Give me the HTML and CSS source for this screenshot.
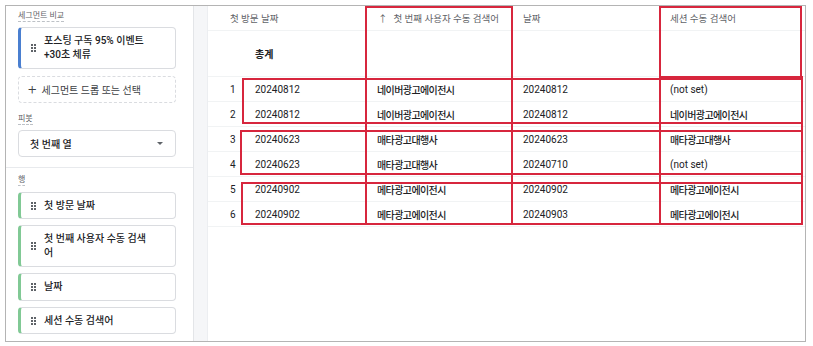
FILE: index.html
```html
<!DOCTYPE html>
<html lang="ko">
<head>
    <meta charset="UTF-8">
    <title>탐색 분석</title>
    <link rel="stylesheet" href="styles.css">
</head>
<body>
    <div class="frame">
        <aside class="panel">
            <section class="block">
                <div class="label">세그먼트 비교</div>
                <div class="chip chip-blue chip-tall">
                    <svg class="grip" viewBox="0 0 5 8"><g fill="#5f6368"><rect x="0" y="0" width="2" height="2"/><rect x="3" y="0" width="2" height="2"/><rect x="0" y="3" width="2" height="2"/><rect x="3" y="3" width="2" height="2"/><rect x="0" y="6" width="2" height="2"/><rect x="3" y="6" width="2" height="2"/></g></svg>
                    <span>포스팅 구독 95% 이벤트<br>+30초 체류</span>
                </div>
                <div class="drop"><span class="plus">+</span>세그먼트 드롭 또는 선택</div>
                <div class="label label-gap">피봇</div>
                <div class="select">
                    <span>첫 번째 열</span>
                    <span class="caret"></span>
                </div>
            </section>
            <section class="block block-rows">
                <div class="label">행</div>
                <div class="chip chip-green">
                    <svg class="grip" viewBox="0 0 5 8"><g fill="#5f6368"><rect x="0" y="0" width="2" height="2"/><rect x="3" y="0" width="2" height="2"/><rect x="0" y="3" width="2" height="2"/><rect x="3" y="3" width="2" height="2"/><rect x="0" y="6" width="2" height="2"/><rect x="3" y="6" width="2" height="2"/></g></svg>
                    <span>첫 방문 날짜</span>
                </div>
                <div class="chip chip-green chip-tall">
                    <svg class="grip" viewBox="0 0 5 8"><g fill="#5f6368"><rect x="0" y="0" width="2" height="2"/><rect x="3" y="0" width="2" height="2"/><rect x="0" y="3" width="2" height="2"/><rect x="3" y="3" width="2" height="2"/><rect x="0" y="6" width="2" height="2"/><rect x="3" y="6" width="2" height="2"/></g></svg>
                    <span>첫 번째 사용자 수동 검색<br>어</span>
                </div>
                <div class="chip chip-green chip-mid">
                    <svg class="grip" viewBox="0 0 5 8"><g fill="#5f6368"><rect x="0" y="0" width="2" height="2"/><rect x="3" y="0" width="2" height="2"/><rect x="0" y="3" width="2" height="2"/><rect x="3" y="3" width="2" height="2"/><rect x="0" y="6" width="2" height="2"/><rect x="3" y="6" width="2" height="2"/></g></svg>
                    <span>날짜</span>
                </div>
                <div class="chip chip-green">
                    <svg class="grip" viewBox="0 0 5 8"><g fill="#5f6368"><rect x="0" y="0" width="2" height="2"/><rect x="3" y="0" width="2" height="2"/><rect x="0" y="3" width="2" height="2"/><rect x="3" y="3" width="2" height="2"/><rect x="0" y="6" width="2" height="2"/><rect x="3" y="6" width="2" height="2"/></g></svg>
                    <span>세션 수동 검색어</span>
                </div>
                <div class="drop"></div>
            </section>
        </aside>

        <div class="gutter"></div>

        <main class="table-wrap">
            <div class="grid">
                <div class="row head">
                    <div class="cell h-first">첫 방문 날짜</div>
                    <div class="cell c2"><span class="arrow">↑</span>첫 번째 사용자 수동 검색어</div>
                    <div class="cell c3">날짜</div>
                    <div class="cell c4">세션 수동 검색어</div>
                </div>
                <div class="row total">
                    <div class="cell idx"></div>
                    <div class="cell c1"><b>총계</b></div>
                    <div class="cell c2"></div>
                    <div class="cell c3"></div>
                    <div class="cell c4"></div>
                </div>
                <div class="row">
                    <div class="cell idx">1</div>
                    <div class="cell c1">20240812</div>
                    <div class="cell c2 ko">네이버광고에이전시</div>
                    <div class="cell c3">20240812</div>
                    <div class="cell c4">(not set)</div>
                </div>
                <div class="row">
                    <div class="cell idx">2</div>
                    <div class="cell c1">20240812</div>
                    <div class="cell c2 ko">네이버광고에이전시</div>
                    <div class="cell c3">20240812</div>
                    <div class="cell c4 ko">네이버광고에이전시</div>
                </div>
                <div class="row">
                    <div class="cell idx">3</div>
                    <div class="cell c1">20240623</div>
                    <div class="cell c2 ko">매타광고대행사</div>
                    <div class="cell c3">20240623</div>
                    <div class="cell c4 ko">매타광고대행사</div>
                </div>
                <div class="row">
                    <div class="cell idx">4</div>
                    <div class="cell c1">20240623</div>
                    <div class="cell c2 ko">매타광고대행사</div>
                    <div class="cell c3">20240710</div>
                    <div class="cell c4">(not set)</div>
                </div>
                <div class="row">
                    <div class="cell idx">5</div>
                    <div class="cell c1">20240902</div>
                    <div class="cell c2 ko">메타광고에이전시</div>
                    <div class="cell c3">20240902</div>
                    <div class="cell c4 ko">메타광고에이전시</div>
                </div>
                <div class="row">
                    <div class="cell idx">6</div>
                    <div class="cell c1">20240902</div>
                    <div class="cell c2 ko">메타광고에이전시</div>
                    <div class="cell c3">20240903</div>
                    <div class="cell c4 ko">메타광고에이전시</div>
                </div>
            </div>

            <!-- 빨간 표시 박스 -->
            <div class="mark mark-col2"></div>
            <div class="mark mark-col4"></div>
            <div class="mark mark-col4b"></div>
            <div class="mark mark-g1"></div>
            <div class="mark mark-g2"></div>
            <div class="mark mark-g3"></div>
        </main>
    </div>
</body>
</html>
```

FILE: styles.css
```css
body {
    margin: 0;
    background: #fff;
    font-family: Roboto, 'Noto Sans CJK KR', sans-serif;
    color: #202124;
}

.frame {
    margin: 5px 0 0 5px;
    width: 799px;
    height: 335px;
    border: 1px solid #b4b4b4;
    display: flex;
    overflow: hidden;
}

/* 왼쪽 설정 패널 */
.panel {
    width: 187px;
    flex: none;
    background: #fff;
}

.block {
    padding: 4px 17px 10px 12px;
    border-bottom: 1px solid #e8eaed;
}

.block-rows {
    padding-top: 6px;
    border-bottom: none;
}

.label {
    width: fit-content;
    font-size: 8px;
    line-height: 11px;
    color: #5f6368;
    border-bottom: 1px dashed #bdc1c6;
}

.label-gap {
    margin-top: 10px;
}

.chip {
    display: flex;
    align-items: center;
    gap: 8px;
    height: 27px;
    box-sizing: border-box;
    margin-top: 6px;
    padding-left: 10px;
    border: 1px solid #dadce0;
    border-left-width: 3px;
    border-radius: 4px;
    font-size: 10px;
    font-weight: 500;
    line-height: 14px;
}

.chip-tall {
    height: 42px;
}

.chip-mid {
    height: 28px;
}

.chip-blue {
    border-left-color: #4a7fd0;
    margin-top: 5px;
}

.chip-green {
    border-left-color: #81c995;
}

.grip {
    width: 5px;
    height: 8px;
    flex: none;
}

.drop {
    display: flex;
    align-items: center;
    height: 27px;
    box-sizing: border-box;
    margin-top: 7px;
    padding-left: 9px;
    border: 1px dashed #dadce0;
    border-radius: 4px;
    font-size: 10px;
    color: #3c4043;
}

.plus {
    font-size: 15px;
    font-weight: 300;
    margin-right: 5px;
    line-height: 1;
}

.select {
    display: flex;
    align-items: center;
    justify-content: space-between;
    height: 27px;
    box-sizing: border-box;
    margin-top: 5px;
    padding: 0 12px 0 11px;
    border: 1px solid #dadce0;
    border-radius: 4px;
    font-size: 10px;
    font-weight: 500;
}

.caret {
    width: 0;
    height: 0;
    border-left: 3px solid transparent;
    border-right: 3px solid transparent;
    border-top: 3px solid #5f6368;
}

.gutter {
    width: 13px;
    flex: none;
    background: #f5f6f8;
    border-left: 1px solid #e3e5e8;
    border-right: 1px solid #eceef1;
}

/* 표 영역 */
.table-wrap {
    position: relative;
    flex: 1;
    font-size: 10px;
}

.row {
    display: grid;
    grid-template-columns: 34px 124px 145px 149px 145px;
    height: 25px;
    border-bottom: 1px solid #f1f3f4;
    box-sizing: border-box;
    align-items: center;
}

.row.head {
    height: 25px;
    color: #5f6368;
    font-size: 9.5px;
}

.row.total {
    height: 46px;
}

.h-first {
    grid-column: 1 / 3;
    padding-left: 22px;
}

.cell {
    white-space: nowrap;
}

.idx {
    padding-left: 22px;
}

.c1 {
    padding-left: 13px;
}

.c2 {
    padding-left: 11px;
}

.head .c2 {
    padding-left: 12px;
}

.c3 {
    padding-left: 12px;
}

.c4 {
    padding-left: 10px;
}

.ko {
    font-weight: 500;
    letter-spacing: -0.6px;
}

.arrow {
    margin-right: 6px;
}

.mark {
    position: absolute;
    border: 2px solid #d7263d;
    box-sizing: border-box;
}

.mark-col2 { left: 157px; top: 0; width: 148px; height: 219px; }
.mark-col4 { left: 451px; top: 0; width: 143px; height: 72px; }
.mark-col4b { left: 451px; top: 70px; width: 144px; height: 149px; }
.mark-g1 { left: 34px; top: 72px; width: 561px; height: 46px; }
.mark-g2 { left: 32px; top: 124px; width: 563px; height: 45px; }
.mark-g3 { left: 33px; top: 176px; width: 562px; height: 43px; }
```
